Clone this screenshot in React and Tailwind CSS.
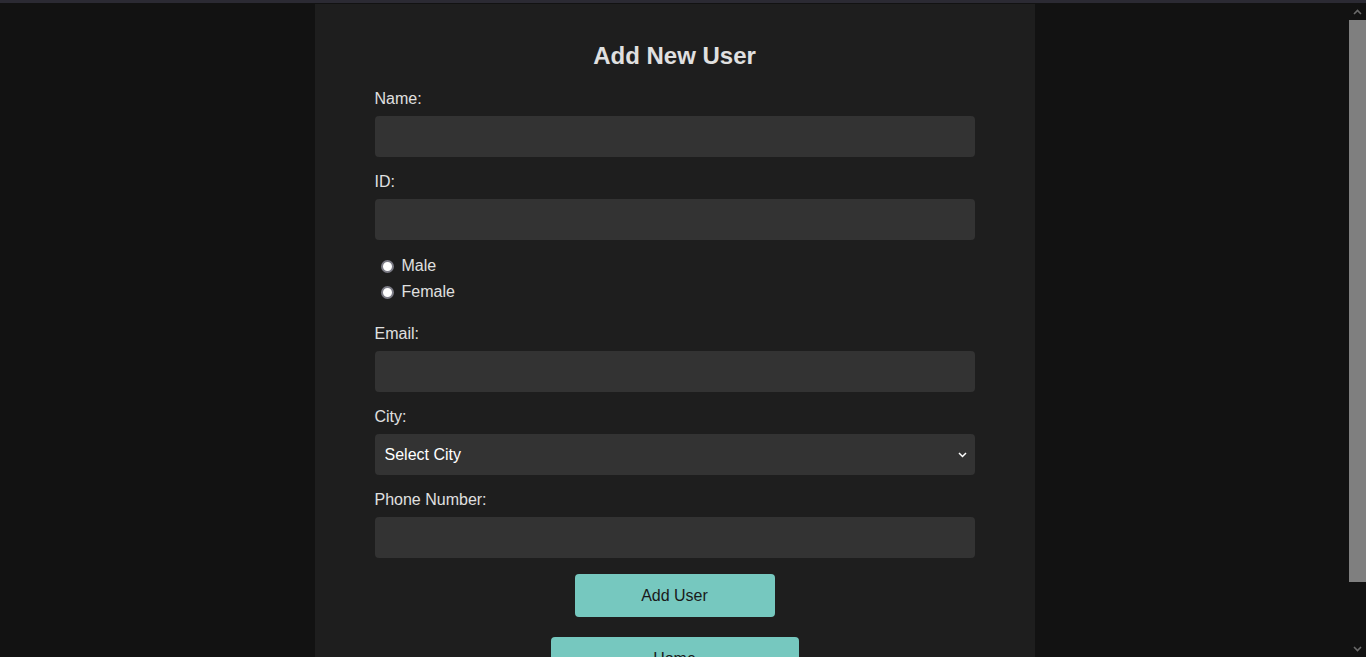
import React, { useState } from "react";

const cities = ["Tel Aviv", "Jerusalem", "Haifa", "Eilat"];

const Label = ({ children }) => (
  <label className="mb-[8px] pt-[1px] text-[16px] leading-[18px] text-[#e0e0e0]">
    {children}
  </label>
);

const Field = ({ label, type = "text", value, onChange }) => (
  <div className="flex flex-col">
    <Label>{label}</Label>
    <input
      type={type}
      value={value}
      onChange={onChange}
      className="h-[41px] w-full rounded-[4px] bg-[#333333] px-[10px] text-[16px] text-white outline-none"
    />
  </div>
);

// page scrollbar, drawn since the headless window hides the real one
const Scrollbar = () => (
  <div className="flex w-[17px] shrink-0 flex-col bg-[#121212]">
    <div className="flex h-[17px] items-center justify-center">
      <svg width="9" height="6" viewBox="0 0 9 6" fill="none">
        <path d="M1 5l3.5-3.5L8 5" stroke="#6a6a6a" strokeWidth="1.6" />
      </svg>
    </div>
    <div className="flex-1">
      <div className="h-[562px] bg-[#7f7f7f]" />
    </div>
    <div className="flex h-[17px] items-center justify-center">
      <svg width="9" height="6" viewBox="0 0 9 6" fill="none">
        <path d="M1 1l3.5 3.5L8 1" stroke="#6a6a6a" strokeWidth="1.6" />
      </svg>
    </div>
  </div>
);

const App = () => {
  const [form, setForm] = useState({
    name: "",
    id: "",
    gender: "",
    email: "",
    city: "",
    phone: "",
  });

  const update = (key) => (e) => setForm({ ...form, [key]: e.target.value });

  return (
    <div className="flex h-[657px] flex-col overflow-hidden bg-[#121212] font-['Liberation_Sans',Arial,sans-serif]">
      <div className="h-[3px] shrink-0 bg-[#2b2a33]" />
      <div className="flex min-h-0 flex-1">
        <div className="min-w-0 flex-1 overflow-hidden">
          <div className="mx-auto mt-px w-[720px] bg-[#1e1e1e] px-[60px] pb-[44px] pt-[38px]">
            <h2 className="text-center text-[24px] font-bold leading-[28px] text-[#e0e0e0]">
              Add New User
            </h2>

            <form
              className="mt-[19px] flex flex-col"
              onSubmit={(e) => e.preventDefault()}
            >
              <Field label="Name:" value={form.name} onChange={update("name")} />
              <div className="mt-[15px]">
                <Field label="ID:" value={form.id} onChange={update("id")} />
              </div>

              <div className="mt-[13px] flex flex-col">
                {["Male", "Female"].map((g) => (
                  <label
                    key={g}
                    className="flex h-[26px] items-center text-[16px] text-[#e0e0e0]"
                  >
                    <input
                      type="radio"
                      name="gender"
                      value={g}
                      checked={form.gender === g}
                      onChange={update("gender")}
                      className="ml-[6px] mr-[8px] h-[13px] w-[13px] appearance-none rounded-full border-2 border-[#7c7c86] bg-white checked:border-[4px] checked:border-[#76c8bf]"
                    />
                    {g}
                  </label>
                ))}
              </div>

              <div className="mt-[19px]">
                <Field
                  label="Email:"
                  type="email"
                  value={form.email}
                  onChange={update("email")}
                />
              </div>

              <div className="mt-[15px] flex flex-col">
                <Label>City:</Label>
                <div className="relative">
                  <select
                    value={form.city}
                    onChange={update("city")}
                    className="h-[41px] w-full appearance-none rounded-[4px] bg-[#333333] px-[10px] text-[16px] text-white outline-none"
                  >
                    <option value="">Select City</option>
                    {cities.map((c) => (
                      <option key={c} value={c}>
                        {c}
                      </option>
                    ))}
                  </select>
                  <svg
                    className="pointer-events-none absolute right-[8px] top-[18px]"
                    width="9"
                    height="6"
                    viewBox="0 0 9 6"
                    fill="none"
                  >
                    <path
                      d="M1 1l3.5 3.5L8 1"
                      stroke="#ffffff"
                      strokeWidth="1.5"
                    />
                  </svg>
                </div>
              </div>

              <div className="mt-[15px]">
                <Field
                  label="Phone Number:"
                  type="tel"
                  value={form.phone}
                  onChange={update("phone")}
                />
              </div>

              <button
                type="submit"
                className="mx-auto mt-[16px] h-[43px] w-[200px] rounded-[4px] bg-[#76c8bf] pt-px text-[16px] text-[#1a1a1a]"
              >
                Add User
              </button>
            </form>

            <div className="mt-[20px] flex justify-center">
              <button className="h-[43px] w-[248px] rounded-[4px] bg-[#76c8bf] pt-px text-[16px] text-[#1a1a1a]">
                Home
              </button>
            </div>
          </div>
        </div>
        <Scrollbar />
      </div>
    </div>
  );
};

export default App;
